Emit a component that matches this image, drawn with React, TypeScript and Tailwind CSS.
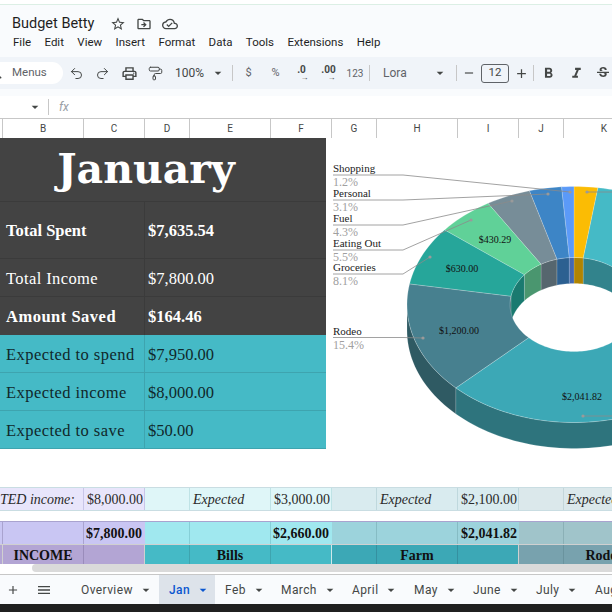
import React from 'react';
import { PaintRoller, Redo2, Undo2 } from 'lucide-react';
import {
  MdAdd,
  MdArrowDropDown,
  MdFormatBold,
  MdFormatItalic,
  MdMenu,
  MdOutlineCloudDone,
  MdOutlineDriveFileMove,
  MdOutlineLocalPrintshop,
  MdRemove,
  MdSearch,
  MdStarBorder,
  MdStrikethroughS,
} from 'react-icons/md';

const columns = [
  { name: '', w: 'w-[3px]' },
  { name: 'B', w: 'w-[81px]' },
  { name: 'C', w: 'w-[61px]' },
  { name: 'D', w: 'w-[45px]' },
  { name: 'E', w: 'w-[81px]' },
  { name: 'F', w: 'w-[61px]' },
  { name: 'G', w: 'w-[45px]' },
  { name: 'H', w: 'w-[81px]' },
  { name: 'I', w: 'w-[61px]' },
  { name: 'J', w: 'w-[45px]' },
  { name: 'K', w: 'w-[81px]' },
];

const menus = ['File', 'Edit', 'View', 'Insert', 'Format', 'Data', 'Tools', 'Extensions', 'Help'];
const sheets = [
  { name: 'Overview', w: 'w-[88px]' },
  { name: 'Jan', w: 'w-[56px]', active: true },
  { name: 'Feb', w: 'w-[56px]' },
  { name: 'March', w: 'w-[71px]' },
  { name: 'April', w: 'w-[62px]' },
  { name: 'May', w: 'w-[59px]' },
  { name: 'June', w: 'w-[63px]' },
  { name: 'July', w: 'w-[59px]' },
  { name: 'Aug', w: 'w-[50px]' },
];

const summary = [
  { label: 'Total Spent', value: '$7,635.54', h: 'h-[57px]', cls: 'font-bold' },
  { label: 'Total Income', value: '$7,800.00', h: 'h-[38px]', cls: 'tracking-[0.4px]' },
  { label: 'Amount Saved', value: '$164.46', h: 'h-[39px]', cls: 'font-bold tracking-[0.5px]' },
];
const expected = [
  { label: 'Expected to spend', value: '$7,950.00' },
  { label: 'Expected income', value: '$8,000.00' },
  { label: 'Expected to save', value: '$50.00' },
];

// donut geometry, angles in degrees clockwise from the top of the ellipse
const CX = 248;
const CY = 166.5;
const RX = 167;
const RY = 118;
const HX = 64;
const HY = 47;
const DEPTH = 26;

const slices = [
  { from: 8.2, to: 129, top: '#45bac6', side: '#2e747d', inner: '#32838c' },
  { from: 0, to: 8.2, top: '#fbbc04', side: '#b08402', inner: '#b08402' },
  { from: -4.3, to: 0, top: '#5b9af8', side: '#4368b0', inner: '#4368b0' },
  { from: -15.5, to: -4.3, top: '#3d85c6', side: '#2c6091', inner: '#2c6091' },
  { from: -31, to: -15.5, top: '#778d98', side: '#56666e', inner: '#56666e' },
  { from: -50.8, to: -31, top: '#60d198', side: '#4a966f', inner: '#4a966f' },
  { from: -80, to: -50.8, top: '#26a69a', side: '#1a7a70', inner: '#1a7a70' },
  { from: -135, to: -80, top: '#47808f', side: '#2f5a63', inner: '#2f5a63' },
  { from: -231, to: -135, top: '#3ca8b6', side: '#2e747d', inner: '#2e747d' },
];

const arc = (rx: number, ry: number, a0: number, a1: number, dy = 0) => {
  const pts: string[] = [];
  const n = Math.max(2, Math.ceil(Math.abs(a1 - a0) / 2));
  for (let i = 0; i <= n; i++) {
    const a = ((a0 + ((a1 - a0) * i) / n) * Math.PI) / 180;
    pts.push(`${(CX + rx * Math.sin(a)).toFixed(2)} ${(CY - ry * Math.cos(a) + dy).toFixed(2)}`);
  }
  return pts;
};

const closed = (a: string[], b: string[]) => `M${[...a, ...b].join('L')}Z`;

const leaders = [
  { name: 'Shopping', pct: '1.2%', y: 37, dx: 244, dy: 54 },
  { name: 'Personal', pct: '3.1%', y: 62, dx: 222, dy: 56 },
  { name: 'Fuel', pct: '4.3%', y: 87, dx: 186, dy: 63 },
  { name: 'Eating Out', pct: '5.5%', y: 112, dx: 145, dy: 82 },
  { name: 'Groceries', pct: '8.1%', y: 136, dx: 104, dy: 119 },
  { name: 'Rodeo', pct: '15.4%', y: 199.5, dx: 97, dy: 200 },
];

const values = [
  { text: '$430.29', x: 169, y: 105 },
  { text: '$630.00', x: 136, y: 134 },
  { text: '$1,200.00', x: 133, y: 196 },
  { text: '$2,041.82', x: 256, y: 262 },
];

const Donut = () => (
  <svg width="286" height="349" className="shrink-0 font-['Liberation_Serif',serif]">
    {slices.map((s) => {
      const a0 = Math.max(s.from, -90);
      const a1 = Math.min(s.to, 90);
      if (a0 >= a1) return null;
      return (
        <path
          key={`in${s.from}`}
          d={closed(arc(HX, HY, a0, a1), arc(HX, HY, a1, a0, DEPTH))}
          fill={s.inner}
          stroke="#ffffff"
          strokeOpacity="0.3"
          strokeWidth="0.5"
        />
      );
    })}
    {slices.map((s) => {
      const a0 = Math.min(s.from, -90);
      const a1 = Math.min(s.to, -90);
      if (a0 >= a1) return null;
      return (
        <path
          key={`out${s.from}`}
          d={closed(arc(RX, RY, a0, a1), arc(RX, RY, a1, a0, DEPTH))}
          fill={s.side}
          stroke="#ffffff"
          strokeOpacity="0.3"
          strokeWidth="0.5"
        />
      );
    })}
    {slices.map((s) => (
      <path
        key={`top${s.from}`}
        d={closed(arc(RX, RY, s.from, s.to), arc(HX, HY, s.to, s.from))}
        fill={s.top}
        stroke="#ffffff"
        strokeOpacity="0.35"
        strokeWidth="0.6"
      />
    ))}
    {leaders.map((l) => (
      <g key={l.name}>
        <polyline
          points={`7,${l.y} 77,${l.y} ${l.dx},${l.dy}`}
          fill="none"
          stroke="#8a8a8a"
          strokeWidth="0.8"
        />
        <circle cx={l.dx} cy={l.dy} r="1.6" fill="#9a9a9a" />
        <text x="7" y={l.y - 3} fontSize="11" fill="#222222">
          {l.name}
        </text>
        <text x="7" y={l.y + 11} fontSize="12" fill="#a0a0a0">
          {l.pct}
        </text>
      </g>
    ))}
    <polyline points="261,54 286,54" fill="none" stroke="#8a8a8a" strokeWidth="0.8" />
    <circle cx="261" cy="54" r="1.6" fill="#9a9a9a" />
    <polyline points="257,278 286,278" fill="none" stroke="#8a8a8a" strokeWidth="0.8" />
    <circle cx="257" cy="278" r="1.6" fill="#9a9a9a" />
    {values.map((v) => (
      <text key={v.text} x={v.x} y={v.y} fontSize="10" textAnchor="middle" fill="#111111">
        {v.text}
      </text>
    ))}
  </svg>
);

const Decimal = ({ text, w }: { text: string; w: string }) => (
  <div className={`${w} flex h-5 shrink-0 flex-col items-center justify-center leading-none text-[#444746]`}>
    <span className="text-[10px] font-bold leading-[10px]">{text}</span>
    <span className="ml-[6px] text-[8px] leading-[6px]">→</span>
  </div>
);

const Sep = ({ className = '' }: { className?: string }) => (
  <div className={`h-[16px] w-px shrink-0 bg-[#c7c7c7] ${className}`} />
);

const Toolbar = () => (
  <div className="flex h-[32px] shrink-0 items-center bg-[#f0f4f9] text-[#444746]">
    <div className="flex h-[22px] w-[63px] shrink-0 items-center rounded-r-full bg-white">
      <MdSearch className="ml-[-12px] text-[16px]" />
      <span className="ml-[8px] text-[11.5px] text-[#5f6368]">Menus</span>
    </div>
    <div className="flex w-[26px] shrink-0 justify-center"><Undo2 size={15} strokeWidth={1.6} /></div>
    <div className="flex w-[27px] shrink-0 justify-center"><Redo2 size={15} strokeWidth={1.6} /></div>
    <div className="flex w-[26px] shrink-0 justify-center"><MdOutlineLocalPrintshop className="text-[17px]" /></div>
    <div className="flex w-[26px] shrink-0 justify-center"><PaintRoller size={15} strokeWidth={1.6} /></div>
    <span className="ml-[7px] w-[35px] shrink-0 text-[12px]">100%</span>
    <MdArrowDropDown className="shrink-0 text-[16px]" />
    <Sep className="ml-[6px]" />
    <span className="w-[31px] shrink-0 text-center text-[11px] text-[#5f6368]">$</span>
    <span className="w-[23px] shrink-0 text-center text-[11px] text-[#5f6368]">%</span>
    <Decimal text=".0" w="w-[29px]" />
    <Decimal text=".00" w="w-[25px]" />
    <span className="w-[28px] shrink-0 text-center text-[10px] text-[#5f6368]">123</span>
    <Sep />
    <span className="ml-[13px] w-[49px] shrink-0 text-[12px] text-[#5f6368]">Lora</span>
    <MdArrowDropDown className="shrink-0 text-[16px]" />
    <Sep className="ml-[8px]" />
    <div className="flex w-[24px] shrink-0 justify-center"><MdRemove className="text-[14px]" /></div>
    <div className="flex h-[19px] w-[28px] shrink-0 items-center justify-center rounded-[3px] border border-[#5f6368] text-[11.5px]">12</div>
    <div className="flex w-[24px] shrink-0 justify-center"><MdAdd className="text-[15px]" /></div>
    <Sep />
    <div className="flex w-[29px] shrink-0 justify-center"><MdFormatBold className="text-[17px]" /></div>
    <div className="flex w-[26px] shrink-0 justify-center"><MdFormatItalic className="text-[17px]" /></div>
    <div className="flex w-[27px] shrink-0 justify-center"><MdStrikethroughS className="text-[16px]" /></div>
  </div>
);

const serif = "font-['Liberation_Serif',serif]";

const App = () => (
  <div className="flex h-[612px] w-[612px] flex-col overflow-hidden bg-white font-['Roboto',sans-serif]">
    <div className="h-[5px] shrink-0 border-b border-[#dcefe5] bg-white" />

    <div className="h-[52px] shrink-0 bg-[#f9fbfd] pl-[12px]">
      <div className="flex h-[29px] items-center pt-[8px] text-[#444746]">
        <span className="w-[88px] shrink-0 text-[14.5px] text-[#1f1f1f]">Budget Betty</span>
        <MdStarBorder className="ml-[10px] text-[16px]" />
        <MdOutlineDriveFileMove className="ml-[10px] text-[16px]" />
        <MdOutlineCloudDone className="ml-[10px] text-[16px]" />
      </div>
      <div className="ml-[1px] flex gap-[13.4px] text-[11.5px] text-[#1f1f1f]">
        {menus.map((m) => (
          <span key={m}>{m}</span>
        ))}
      </div>
    </div>

    <Toolbar />

    <div className="h-[7px] shrink-0 bg-[#f9fbfd]" />
    <div className="flex h-[22px] shrink-0 items-center bg-white">
      <MdArrowDropDown className="ml-[27px] text-[16px] text-[#444746]" />
      <Sep className="ml-[5px]" />
      <span className="ml-[10px] text-[12px] italic text-[#9aa0a6]">fx</span>
    </div>

    <div className="flex h-[20px] shrink-0 border-t border-[#c7c7c7]">
      {columns.map((c) => (
        <div
          key={c.name || 'A'}
          className={`${c.w} flex shrink-0 items-center justify-center border-r border-[#c7c7c7] text-[10px] text-[#444746]`}
        >
          {c.name}
        </div>
      ))}
    </div>

    <div className={`flex h-[349px] shrink-0 ${serif}`}>
      <div className="w-[326px] shrink-0">
        <div className="flex h-[63px] items-center justify-center bg-[#434343] pr-[34px] font-['DejaVu_Serif',serif] text-[41px] font-bold text-white">
          January
        </div>
        {summary.map((r) => (
          <div key={r.label} className={`${r.h} flex items-center border-t border-[#3b3b3b] bg-[#434343] text-white ${r.cls}`}>
            <div className="flex h-full w-[145px] shrink-0 items-center border-r border-[#3b3b3b] pl-[6px] pt-[3px] text-[16.5px]">{r.label}</div>
            <div className="pl-[3px] pt-[3px] text-[16.5px] tracking-normal">{r.value}</div>
          </div>
        ))}
        {expected.map((r) => (
          <div key={r.label} className="flex h-[38px] items-center border-b border-[#3ea4af] bg-[#45bac6] text-[#10282b]">
            <div className="flex h-full w-[145px] shrink-0 items-center border-r border-[#3ea4af] pl-[6px] pt-[3px] text-[16.5px] tracking-[0.45px]">{r.label}</div>
            <div className="pl-[3px] pt-[3px] text-[16.5px]">{r.value}</div>
          </div>
        ))}
      </div>
      <Donut />
    </div>

    <div className={`grid h-[24px] shrink-0 grid-cols-[84px_61px_45px_81px_61px_45px_81px_61px_45px_81px] border-y border-[#c9dde2] text-[14px] text-[#2a2a2a] ${serif}`}>
      <div className="flex items-center justify-end overflow-hidden whitespace-nowrap border-r border-[#c9c6e8] bg-[#e8e5fb] pr-[8px] italic">TED income:</div>
      <div className="flex items-center border-r border-[#c9c6e8] bg-[#e8e5fb] pl-[3px]">$8,000.00</div>
      <div className="border-r border-[#bfe3e6] bg-[#dff6f8]" />
      <div className="flex items-center border-r border-[#bfe3e6] bg-[#dff6f8] pl-[3px] italic">Expected</div>
      <div className="flex items-center border-r border-[#bfe3e6] bg-[#dff6f8] pl-[3px]">$3,000.00</div>
      <div className="border-r border-[#bfd8dd] bg-[#d9ebef]" />
      <div className="flex items-center border-r border-[#bfd8dd] bg-[#d9ebef] pl-[3px] italic">Expected</div>
      <div className="flex items-center border-r border-[#bfd8dd] bg-[#d9ebef] pl-[3px]">$2,100.00</div>
      <div className="border-r border-[#c4d6da] bg-[#dbe8eb]" />
      <div className="flex items-center bg-[#dbe8eb] pl-[3px] italic">Expected</div>
    </div>

    <div className="h-[10px] shrink-0" />

    <div className={`grid h-[23px] shrink-0 grid-cols-[3px_81px_61px_45px_81px_61px_45px_81px_61px_45px_81px] border-t border-[#a9a3cf] text-[14px] font-bold text-[#111111] ${serif}`}>
      <div className="border-r border-[#a9a3cf] bg-[#c9c6f3]" />
      <div className="border-r border-[#a9a3cf] bg-[#c9c6f3]" />
      <div className="flex items-center bg-[#c9c6f3] pl-[2px]">$7,800.00</div>
      <div className="border-r border-[#86cfd7] bg-[#a0e8ef]" />
      <div className="border-r border-[#86cfd7] bg-[#a0e8ef]" />
      <div className="flex items-center bg-[#a0e8ef] pl-[2px]">$2,660.00</div>
      <div className="border-r border-[#86bcc4] bg-[#9cd3dc]" />
      <div className="border-r border-[#86bcc4] bg-[#9cd3dc]" />
      <div className="flex items-center bg-[#9cd3dc] pl-[3px]">$2,041.82</div>
      <div className="border-r border-[#8bb0b6] bg-[#a0c4ca]" />
      <div className="bg-[#a0c4ca]" />
    </div>

    <div className={`grid h-[20px] shrink-0 grid-cols-[3px_81px_61px_45px_81px_61px_45px_81px_61px_45px_81px] border-t border-[#d0d0d0] text-[14px] font-bold text-[#111111] ${serif}`}>
      <div className="border-r border-[#d0d0d0] bg-[#b3a5d4]" />
      <div className="flex items-center justify-center border-r border-[#9a8cbb] bg-[#b3a5d4]">INCOME</div>
      <div className="border-r border-[#d0d0d0] bg-[#b3a5d4]" />
      <div className="border-r border-[#3ea4af] bg-[#45bac6]" />
      <div className="flex items-center justify-center border-r border-[#3ea4af] bg-[#45bac6]">Bills</div>
      <div className="border-r border-[#d0e8ea] bg-[#45bac6]" />
      <div className="border-r border-[#3590a0] bg-[#3ca8b6]" />
      <div className="flex items-center justify-center border-r border-[#3590a0] bg-[#3ca8b6]">Farm</div>
      <div className="border-r border-[#d0d0d0] bg-[#3ca8b6]" />
      <div className="border-r border-[#6a939e] bg-[#78a2ae]" />
      <div className="flex items-center justify-center bg-[#78a2ae]">Rodeo</div>
    </div>

    <div className="flex h-[8px] shrink-0 bg-white">
      <div className="w-[32px] shrink-0 bg-white" />
      <div className="flex-1 rounded-l-full bg-[#dadada]" />
    </div>

    <div className="h-[3px] shrink-0 border-b border-[#c7c7c7] bg-white" />

    <div className="flex h-[29px] shrink-0 items-center bg-[#f9fbfd] text-[#444746]">
      <div className="flex w-[25px] shrink-0 justify-center"><MdAdd className="text-[14px]" /></div>
      <div className="flex w-[38px] shrink-0 justify-center"><MdMenu className="text-[16px]" /></div>
      <div className="w-[8px] shrink-0" />
      {sheets.map((s) => (
        <div
          key={s.name}
          className={`${s.w} flex h-full shrink-0 items-center gap-[5px] pl-[10px] text-[12px] tracking-[0.4px] ${
            s.active ? 'bg-[#dde3ea] font-medium text-[#0b57d0]' : ''
          }`}
        >
          <span>{s.name}</span>
          {s.name !== 'Aug' && <MdArrowDropDown className="shrink-0 text-[16px]" />}
        </div>
      ))}
    </div>

    <div className="flex-1 bg-[#202020]" />
  </div>
);

export default App;
